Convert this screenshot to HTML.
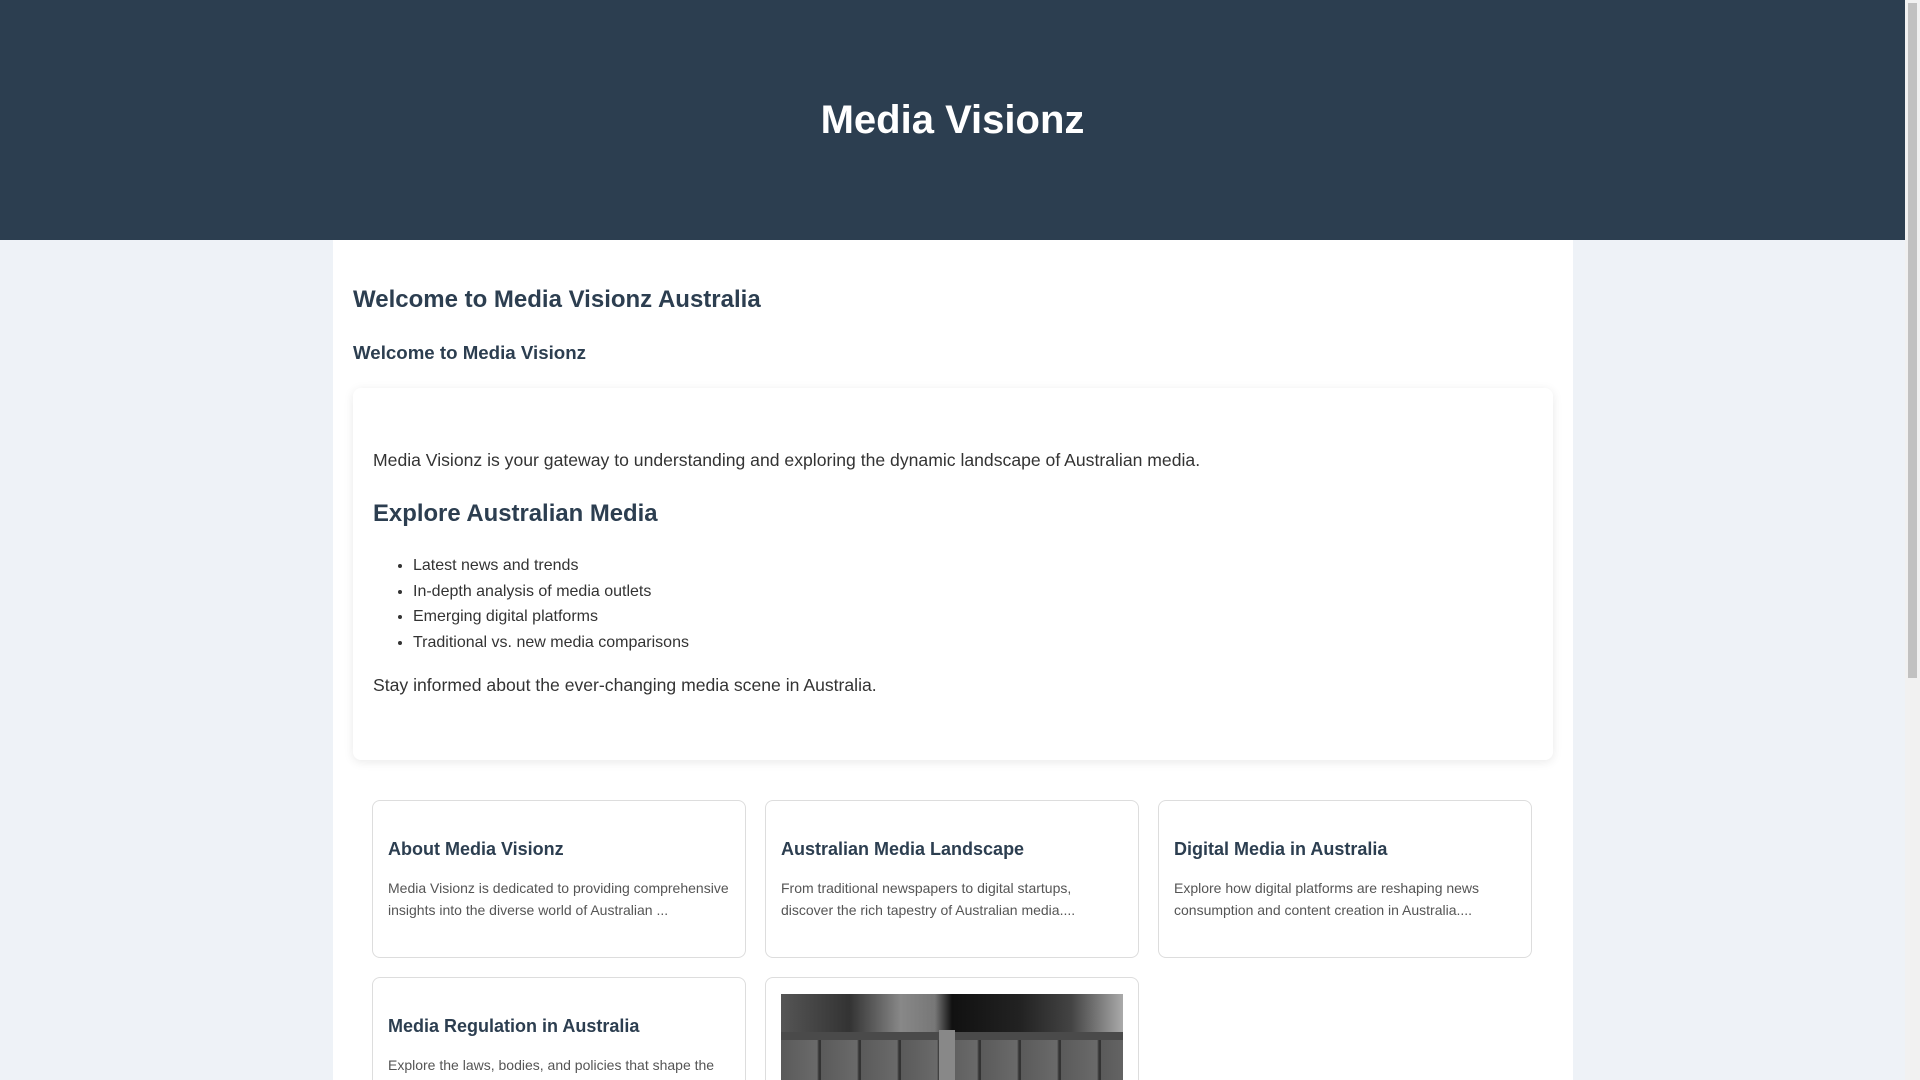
<!DOCTYPE html>
<html><head><meta charset="utf-8"><style>
*{box-sizing:border-box;margin:0;padding:0}
html,body{width:1920px;height:1080px;overflow:hidden}
body{background:#eef2f7;font-family:"Liberation Sans",Arial,sans-serif;color:#333;position:relative}
.sb{position:absolute;right:0;top:0;width:15px;height:1080px;background:#f1f1f1}
.sb i{position:absolute;left:3px;top:3px;width:9px;height:675px;background:#c1c1c1}
header{position:absolute;left:0;top:0;width:1905px;height:240px;background:#2c3e50;color:#fff;text-align:center}
header h1{font-size:40px;font-weight:bold;line-height:46px;padding-top:97px}
.wrap{position:absolute;left:333px;top:240px;width:1240px;height:840px;background:#fff}
.h2a{position:absolute;left:20px;top:46px;font-size:24px;color:#2c3e50;font-weight:bold}
.h3a{position:absolute;left:20px;top:102px;font-size:18.7px;color:#2c3e50;font-weight:bold}
.box{position:absolute;left:20px;top:148px;width:1200px;height:372px;background:#fff;border-radius:8px;box-shadow:0 2px 10px rgba(0,0,0,.09)}
.box p{position:absolute;left:20px;font-size:17.6px;color:#333}
.box h2{position:absolute;left:20px;top:112px;font-size:23.9px;color:#2c3e50}
.box ul{position:absolute;left:60px;top:165px;font-size:16px;line-height:25.7px;color:#333}
.card{position:absolute;width:374px;height:158px;border:1px solid #ddd;border-radius:8px;background:#fff}
.card h3{position:absolute;left:15px;top:38px;font-size:18px;color:#2c3e50}
.card p{position:absolute;left:15px;top:76px;width:345px;font-size:14px;line-height:22px;color:#555}
.img{position:absolute;left:15px;top:16px;width:342px;height:120px;background:#222;overflow:hidden}
</style></head><body>
<header><h1>Media Visionz</h1></header>
<div class="wrap">
<div class="h2a">Welcome to Media Visionz Australia</div>
<div class="h3a">Welcome to Media Visionz</div>
<div class="box">
<p style="top:62px">Media Visionz is your gateway to understanding and exploring the dynamic landscape of Australian media.</p>
<h2>Explore Australian Media</h2>
<ul><li>Latest news and trends</li><li>In-depth analysis of media outlets</li><li>Emerging digital platforms</li><li>Traditional vs. new media comparisons</li></ul>
<p style="top:287px">Stay informed about the ever-changing media scene in Australia.</p>
</div>
<div class="card" style="left:39px;top:560px"><h3>About Media Visionz</h3><p>Media Visionz is dedicated to providing comprehensive insights into the diverse world of Australian ...</p></div>
<div class="card" style="left:432px;top:560px"><h3>Australian Media Landscape</h3><p>From traditional newspapers to digital startups, discover the rich tapestry of Australian media....</p></div>
<div class="card" style="left:825px;top:560px"><h3>Digital Media in Australia</h3><p>Explore how digital platforms are reshaping news consumption and content creation in Australia....</p></div>
<div class="card" style="left:39px;top:737px"><h3>Media Regulation in Australia</h3><p>Explore the laws, bodies, and policies that shape the</p></div>
<div class="card" style="left:432px;top:737px;height:200px"><div class="img">
<div style="position:absolute;left:0;top:0;width:342px;height:38px;background:linear-gradient(90deg,#555 0,#333 20%,#888 35%,#777 45%,#111 50%,#222 70%,#444 85%,#aaa 100%)"></div>
<div style="position:absolute;left:0;top:38px;width:342px;height:8px;background:#4a4a4a"></div>
<div style="position:absolute;left:0;top:46px;width:342px;height:80px;background:repeating-linear-gradient(90deg,#5a5a5a 0,#6a6a6a 36px,#333 38px,#333 40px)"></div>
<div style="position:absolute;left:158px;top:36px;width:16px;height:90px;background:#888"></div>
</div></div>
</div>
<div class="sb"><i></i></div>
</body></html>
